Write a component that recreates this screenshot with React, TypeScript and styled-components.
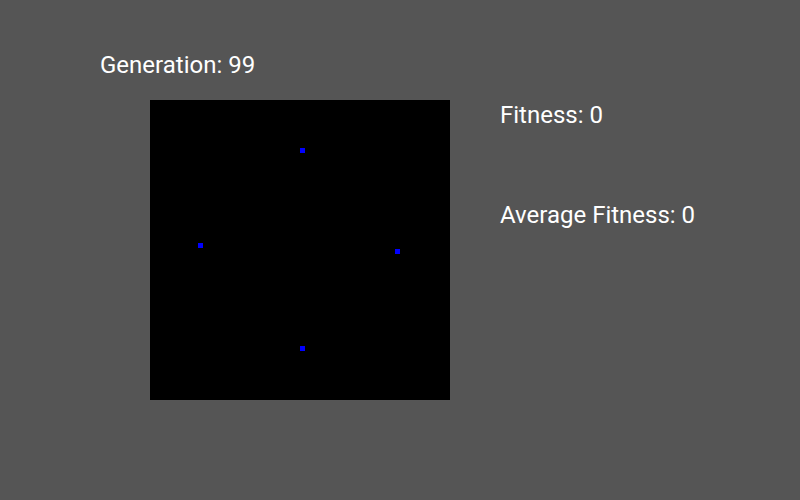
import styled, { createGlobalStyle } from "styled-components";

const GlobalStyle = createGlobalStyle`
  html, body {
    margin: 0;
    padding: 0;
    background: #555555;
    font-family: Roboto, "Liberation Sans", sans-serif;
    color: #ffffff;
  }
`;

const Page = styled.div`
  width: 800px;
  height: 500px;
  box-sizing: border-box;
  padding: 51px 0 0 100px;
`;

const Label = styled.div`
  font-size: 24px;
  line-height: 28px;
  white-space: nowrap;
`;

const Row = styled.div`
  display: flex;
  margin-top: 21px;
  padding-left: 50px;
  gap: 50px;
`;

const Board = styled.div`
  position: relative;
  width: 300px;
  height: 300px;
  background: #000000;
`;

const Dot = styled.div`
  position: absolute;
  width: 5px;
  height: 5px;
  background: #0000ff;
`;

const Stats = styled.div`
  display: flex;
  flex-direction: column;
  gap: 72px;
  margin-top: 1px;
`;

const dots = [
  { x: 150, y: 48 },
  { x: 48, y: 143 },
  { x: 245, y: 149 },
  { x: 150, y: 246 },
];

export default function App() {
  return (
    <>
      <GlobalStyle />
      <Page>
        <Label>Generation: 99</Label>
        <Row>
          <Board>
            {dots.map((d, i) => (
              <Dot key={i} style={{ left: d.x, top: d.y }} />
            ))}
          </Board>
          <Stats>
            <Label>Fitness: 0</Label>
            <Label>Average Fitness: 0</Label>
          </Stats>
        </Row>
      </Page>
    </>
  );
}
